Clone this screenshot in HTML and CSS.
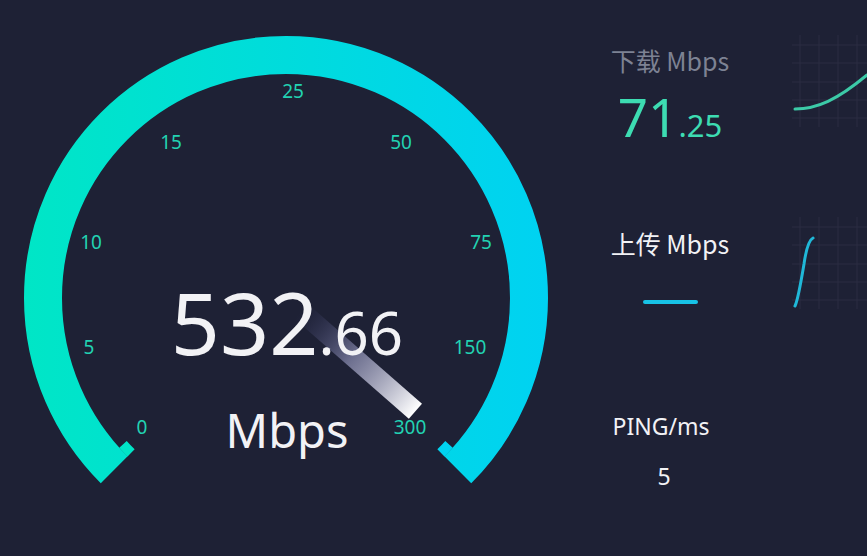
FILE: index.html
```html
<!DOCTYPE html>
<html lang="zh-CN">
<head>
  <meta charset="UTF-8" />
  <meta name="viewport" content="width=device-width, initial-scale=1.0" />
  <title>网速测试</title>
  <link rel="stylesheet" href="styles.css">
</head>
<body>
  <div class="app">
    <!-- Gauge -->
    <div class="gauge">
      <svg class="dial" width="580" height="556" viewBox="0 0 580 556">
        <defs>
          <linearGradient id="ring" x1="24" y1="0" x2="548" y2="0" gradientUnits="userSpaceOnUse">
            <stop offset="0" stop-color="#00e6c6" />
            <stop offset="1" stop-color="#00d2f2" />
          </linearGradient>
          <linearGradient id="needle" x1="20" y1="0" x2="172" y2="0" gradientUnits="userSpaceOnUse">
            <stop offset="0" stop-color="#3b3e70" stop-opacity="0" />
            <stop offset="0.45" stop-color="#8d8fb4" stop-opacity="0.7" />
            <stop offset="1" stop-color="#ffffff" />
          </linearGradient>
        </defs>
        <path d="M114.2 469.8 A243 243 0 1 1 457.8 469.8" fill="none" stroke="url(#ring)" stroke-width="38" />
        <path d="M131.1 452.9 A219 219 0 0 1 123.0 444.3" fill="none" stroke="#00e5c7" stroke-width="10" />
        <path d="M449.0 444.3 A219 219 0 0 1 440.9 452.9" fill="none" stroke="#00d3f0" stroke-width="10" />
        <g class="ticks">
          <text x="142" y="434">0</text>
          <text x="89" y="354">5</text>
          <text x="91" y="249">10</text>
          <text x="171" y="149">15</text>
          <text x="293" y="98">25</text>
          <text x="401" y="149">50</text>
          <text x="481" y="249">75</text>
          <text x="470" y="354">150</text>
          <text x="410" y="434">300</text>
        </g>
        <g transform="translate(286 298) rotate(41.2)">
          <rect x="20" y="-10" width="152" height="20" fill="url(#needle)" />
        </g>
      </svg>
      <div class="readout">
        <div class="speed"><span class="int">532</span><span class="dec">.66</span></div>
        <div class="unit">Mbps</div>
      </div>
    </div>

    <!-- Stats -->
    <div class="stats">
      <div class="stat">
        <div class="label muted">下载 Mbps</div>
        <div class="value"><span class="int">71</span><span class="dec">.25</span></div>
      </div>
      <div class="stat">
        <div class="label">上传 Mbps</div>
        <div class="dash"></div>
      </div>
      <div class="stat">
        <div class="label ping">PING/ms</div>
        <div class="ping-value">5</div>
      </div>
    </div>

    <!-- Mini charts -->
    <div class="charts">
      <svg class="chart" width="75" height="100" viewBox="0 0 75 100">
        <g class="grid">
          <path d="M0 15H75M0 33H75M0 52H75M0 70H75M0 88H75" />
          <path d="M8 5V97M27 5V97M46 5V97M65 5V97" />
        </g>
        <path class="line down" d="M3 79 C25 79 45 70 75 45" />
      </svg>
      <svg class="chart" width="75" height="100" viewBox="0 0 75 100">
        <g class="grid">
          <path d="M0 15H75M0 33H75M0 52H75M0 70H75M0 88H75" />
          <path d="M8 5V97M27 5V97M46 5V97M65 5V97" />
        </g>
        <path class="line up" d="M3 94 C6 88 9 70 12 52 C14 38 17 28 21 26" />
      </svg>
    </div>
  </div>
</body>
</html>
```

FILE: styles.css
```css
html, body {
  margin: 0;
  padding: 0;
}
body {
  background-color: #1e2135;
  font-family: "Noto Sans", "Noto Sans CJK SC", sans-serif;
  color: #f2f2f5;
  overflow: hidden;
}
.app {
  display: flex;
  width: 867px;
  height: 556px;
  overflow: hidden;
}
.gauge {
  position: relative;
  width: 580px;
  height: 556px;
  flex-shrink: 0;
}
.dial {
  display: block;
}
.ticks text {
  font-family: "Noto Sans", sans-serif;
  font-size: 19px;
  fill: #22d2b2;
  text-anchor: middle;
}
/* big number sits over the dial */
.readout {
  position: absolute;
  left: 0;
  top: 279px;
  width: 574px;
  text-align: center;
}
.speed {
  line-height: 1;
  white-space: nowrap;
}
.speed .int {
  font-size: 86px;
}
.speed .dec {
  font-size: 60px;
}
.unit {
  margin-top: 42px;
  font-size: 47px;
  line-height: 1;
}
.stats {
  width: 180px;
  padding-top: 45px;
  flex-shrink: 0;
  display: flex;
  flex-direction: column;
  align-items: center;
}
.stat {
  height: 183px;
  flex-shrink: 0;
  display: flex;
  flex-direction: column;
  align-items: center;
}
.label {
  font-family: "Noto Sans CJK SC", "Noto Sans", sans-serif;
  font-size: 25px;
  line-height: 30px;
}
.muted {
  color: #7d8293;
}
.value {
  margin-top: 12px;
  color: #3ddcb2;
  line-height: 60px;
}
.value .int {
  font-size: 53px;
}
.value .dec {
  font-size: 31px;
}
.dash {
  margin-top: 42px;
  width: 55px;
  height: 4px;
  border-radius: 2px;
  background-color: #17c2e6;
}
.ping {
  font-family: "Noto Sans", sans-serif;
  font-size: 23px;
  margin-right: 18px;
}
.ping-value {
  margin-top: 20px;
  margin-right: 12px;
  font-size: 23px;
  line-height: 30px;
}
.charts {
  display: flex;
  flex-direction: column;
  gap: 82px;
  padding-top: 30px;
  margin-left: 32px;
}
.chart {
  display: block;
  flex-shrink: 0;
}
.grid path {
  stroke: #2b2d43;
  stroke-width: 1;
  fill: none;
}
.line {
  fill: none;
  stroke-width: 3;
  stroke-linecap: round;
}
.line.down {
  stroke: #3ccaa7;
}
.line.up {
  stroke: #20b8d8;
}
```
